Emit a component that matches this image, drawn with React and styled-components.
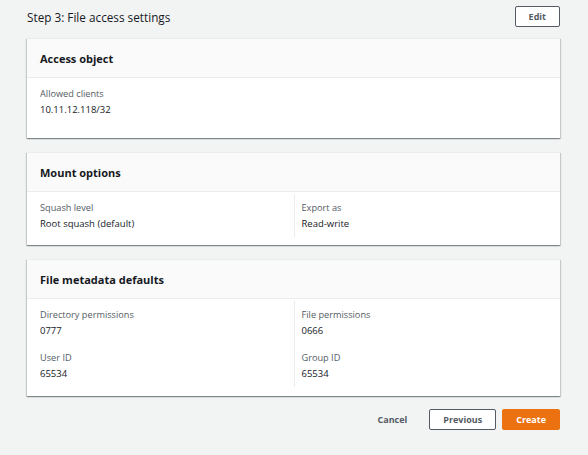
import React from "react";
import styled, { createGlobalStyle } from "styled-components";

const GlobalStyle = createGlobalStyle`
  html, body {
    margin: 0;
    padding: 0;
    background: #f2f3f3;
  }
  body {
    font-family: "Open Sans", "Noto Sans", Arial, sans-serif;
    color: #16191f;
  }
`;

const Page = styled.div`
  width: 533px;
  padding: 6px 0 0 27px;
`;

const TopBar = styled.div`
  display: flex;
  align-items: center;
  justify-content: space-between;
  height: 21px;
  margin-bottom: 11px;
`;

const Title = styled.h2`
  margin: 0;
  font-size: 11.75px;
  font-weight: 400;
  color: #16191f;
`;

const Button = styled.button`
  font-family: inherit;
  font-size: 9px;
  font-weight: 700;
  height: 21px;
  padding: 0 ${(p) => p.$pad || 13}px;
  border-radius: 2px;
  cursor: pointer;
  border: 1px solid ${(p) => (p.$primary ? "#ec7211" : p.$link ? "transparent" : "#545b64")};
  background: ${(p) => (p.$primary ? "#ec7211" : p.$link ? "transparent" : "#fff")};
  color: ${(p) => (p.$primary ? "#fff" : "#545b64")};
`;

const Stack = styled.div`
  display: flex;
  flex-direction: column;
  gap: 14px;
`;

const Card = styled.section`
  background: #fff;
  border-top: 1px solid #eaeded;
  box-shadow: 0 1px 1px 0 rgba(0, 28, 36, 0.3), 1px 1px 1px 0 rgba(0, 28, 36, 0.15),
    -1px 1px 1px 0 rgba(0, 28, 36, 0.15);
`;

const CardHeader = styled.header`
  height: 38px;
  display: flex;
  align-items: center;
  padding: 0 13px;
  background: #fafafa;
  border-bottom: 1px solid #eaeded;
`;

const CardTitle = styled.h3`
  margin: 0;
  font-size: 11px;
  font-weight: 700;
  color: #16191f;
`;

const CardBody = styled.div`
  display: grid;
  grid-template-columns: repeat(${(p) => p.$cols}, 1fr);
  padding: 2px 13px ${(p) => p.$bottom}px;
`;

const Column = styled.div`
  display: flex;
  flex-direction: column;
  gap: 13px;
  padding: 7px 7px 6px 0;

  & + & {
    border-left: 1px solid #eaeded;
    padding-left: 7px;
  }
`;

const Pair = styled.div`
  display: flex;
  flex-direction: column;
  gap: 2px;
`;

const Label = styled.div`
  font-size: 9.2px;
  line-height: 14px;
  color: #545b64;
`;

const Value = styled.div`
  font-size: 9.5px;
  line-height: 14px;
  font-weight: 500;
  color: #16191f;
`;

const Footer = styled.div`
  display: flex;
  justify-content: flex-end;
  align-items: center;
  gap: 6px;
  margin-top: 13px;
`;

const sections = [
  {
    title: "Access object",
    bottom: 15,
    columns: [[["Allowed clients", "10.11.12.118/32"]]],
  },
  {
    title: "Mount options",
    bottom: 8,
    columns: [
      [["Squash level", "Root squash (default)"]],
      [["Export as", "Read-write"]],
    ],
  },
  {
    title: "File metadata defaults",
    bottom: 9,
    columns: [
      [
        ["Directory permissions", "0777"],
        ["User ID", "65534"],
      ],
      [
        ["File permissions", "0666"],
        ["Group ID", "65534"],
      ],
    ],
  },
];

export default function App() {
  return (
    <>
      <GlobalStyle />
      <Page>
        <TopBar>
          <Title>Step 3: File access settings</Title>
          <Button>Edit</Button>
        </TopBar>
        <Stack>
          {sections.map((s) => (
            <Card key={s.title}>
              <CardHeader>
                <CardTitle>{s.title}</CardTitle>
              </CardHeader>
              <CardBody $cols={s.columns.length} $bottom={s.bottom}>
                {s.columns.map((col, i) => (
                  <Column key={i}>
                    {col.map(([label, value]) => (
                      <Pair key={label}>
                        <Label>{label}</Label>
                        <Value>{value}</Value>
                      </Pair>
                    ))}
                  </Column>
                ))}
              </CardBody>
            </Card>
          ))}
        </Stack>
        <Footer>
          <Button $link $pad={15}>Cancel</Button>
          <Button>Previous</Button>
          <Button $primary>Create</Button>
        </Footer>
      </Page>
    </>
  );
}
